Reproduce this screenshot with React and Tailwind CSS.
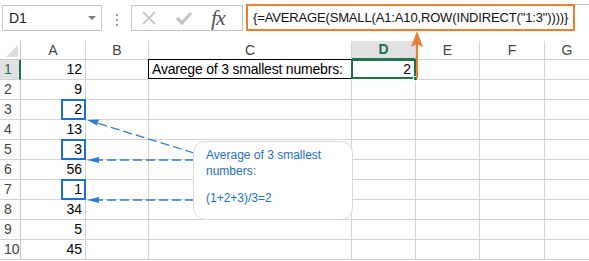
import React from "react";

const F = { fontFamily: '"Liberation Sans", Arial, sans-serif' };

const values = ["12", "9", "2", "13", "3", "56", "1", "34", "5", "45"];
const boxed = [2, 4, 6];

function HeaderCell({ children, active, className = "" }) {
  return (
    <div
      className={`h-[19px] flex items-center justify-center border-r border-b border-[#d4d4d4] text-[14px] ${
        active ? "bg-[#e1e1e1] text-[#217346] font-bold border-b-[#217346] border-b-2" : "bg-white text-[#444]"
      } ${className}`}
    >
      {children}
    </div>
  );
}

export default function App() {
  return (
    <div className="relative w-[589px] h-[261px] overflow-hidden bg-white text-black" style={F}>
      {/* formula bar */}
      <div className="h-[41px] flex items-start pt-[4px]">
        <div className="ml-[2px] mt-[1px] w-[100px] h-[26px] border border-[#c6c6c6] flex items-center pl-[6px] pr-[5px] justify-between">
          <span className="text-[14px] text-[#222]">D1</span>
          <span className="w-0 h-0 border-l-[4px] border-r-[4px] border-t-[4px] border-l-transparent border-r-transparent border-t-[#7a7a7a]" />
        </div>
        <div className="ml-[14px] mt-[10px] flex flex-col gap-[3px]">
          <span className="w-[2px] h-[2px] bg-[#9a9a9a]" />
          <span className="w-[2px] h-[2px] bg-[#9a9a9a]" />
          <span className="w-[2px] h-[2px] bg-[#9a9a9a]" />
        </div>
        <div className="ml-[13px] mt-[1px] w-[112px] h-[26px] border border-[#c6c6c6] flex items-center">
          <svg width="16" height="16" viewBox="0 0 16 16" className="ml-[9px]">
            <path d="M2 2 L14 14 M14 2 L2 14" stroke="#c8c8c8" strokeWidth="1.8" fill="none" />
          </svg>
          <svg width="18" height="16" viewBox="0 0 18 16" className="ml-[18px]">
            <path d="M2 8 L7 13 L16 3" stroke="#c4c4c4" strokeWidth="3.2" fill="none" />
          </svg>
          <span
            className="ml-[18px] text-[22px] italic text-[#555] leading-none tracking-[-1px]"
            style={{ fontFamily: '"Liberation Serif", "Times New Roman", serif' }}
          >
            fx
          </span>
        </div>
        <div className="ml-[3px] w-[329px] h-[27px] border-2 border-[#ed7d31] flex items-center pl-[5px] text-[13px] text-[#111] whitespace-nowrap tracking-[-0.15px]">
          {'{=AVERAGE(SMALL(A1:A10,ROW(INDIRECT("1:3"))))}'}
        </div>
        <div className="flex-1 mt-0 border-t border-[#c6c6c6]" />
      </div>

      {/* sheet */}
      <div className="grid grid-cols-[21px_65px_63px_203px_64px_64px_65px_1fr]">
        <div className="h-[19px] border-r border-b border-[#c8c8c8] relative">
          <svg width="14" height="14" className="absolute left-[5px] top-[3px]" viewBox="0 0 14 14">
            <path d="M13 1 L13 13 L1 13 Z" fill="#dcdcdc" />
          </svg>
        </div>
        <HeaderCell>A</HeaderCell>
        <HeaderCell>B</HeaderCell>
        <HeaderCell>C</HeaderCell>
        <HeaderCell active>D</HeaderCell>
        <HeaderCell>E</HeaderCell>
        <HeaderCell>F</HeaderCell>
        <HeaderCell className="border-r-0">G</HeaderCell>

        {values.map((v, i) => {
          const r = i + 1;
          const first = r === 1;
          return (
            <React.Fragment key={r}>
              <div
                className={`h-[20px] flex items-center pl-[4px] text-[14px] border-b border-[#d4d4d4] ${
                  first ? "bg-[#e1e1e1] text-[#217346] border-r-2 border-r-[#217346]" : "text-[#444] border-r border-r-[#c8c8c8]"
                }`}
              >
                {r}
              </div>
              <div className="relative h-[20px] flex items-center justify-end pr-[3px] text-[14px] border-r border-b border-[#d4d4d4]">
                {v}
                {boxed.includes(i) && (
                  <span className="absolute left-[40px] right-[-1px] top-[-1px] bottom-[-1px] border-2 border-[#1d6fd0]" />
                )}
              </div>
              <div className="h-[20px] border-r border-b border-[#d4d4d4]" />
              {first ? (
                <div className="h-[20px] flex items-center pl-[3px] text-[14px] border-l border-t border-b border-black -mt-px -ml-px whitespace-nowrap tracking-[-0.2px]">
                  Avarege of 3 smallest numebrs:
                </div>
              ) : (
                <div className="h-[20px] border-r border-b border-[#d4d4d4]" />
              )}
              {first ? (
                <div className="relative h-[20px] flex items-center justify-end pr-[3px] text-[14px] border-2 border-[#217346] -mt-px -ml-px">
                  2
                  <span className="absolute right-[-4px] bottom-[-4px] w-[5px] h-[5px] bg-[#217346] border border-white" />
                </div>
              ) : (
                <div className="h-[20px] border-r border-b border-[#d4d4d4]" />
              )}
              <div className="h-[20px] border-r border-b border-[#d4d4d4]" />
              <div className="h-[20px] border-r border-b border-[#d4d4d4]" />
              <div className="h-[20px] border-b border-[#d4d4d4]" />
            </React.Fragment>
          );
        })}
      </div>

      {/* arrows overlay */}
      <svg className="absolute left-0 top-0 pointer-events-none" width="589" height="261" viewBox="0 0 589 261">
        <g stroke="#2f7bd8" strokeWidth="1.3" fill="none" strokeDasharray="9 4">
          <path d="M194 153 L97 123" />
          <path d="M194 160 L98 160" />
          <path d="M194 200 L98 200" />
        </g>
        <g fill="#2f7bd8">
          <path d="M87 120 L99 119.5 L97 125.5 Z" />
          <path d="M87 160 L99 157 L99 163 Z" />
          <path d="M87 200 L99 197 L99 203 Z" />
        </g>
        <path d="M417 79 L417 44" stroke="#ed7d31" strokeWidth="2" />
        <path d="M417 31 L423 47 L417 44 L411 47 Z" fill="#ed7d31" />
      </svg>

      {/* callout */}
      <div className="absolute left-[193px] top-[141px] w-[160px] h-[79px] rounded-[12px] border border-[#d9d9d9] bg-white pl-[12px] pt-[5px] text-[12px] leading-[16px] text-[#1d6fd0]">
        <div>Average of 3 smallest</div>
        <div>numbers:</div>
        <div className="mt-[11px]">(1+2+3)/3=2</div>
      </div>
    </div>
  );
}
